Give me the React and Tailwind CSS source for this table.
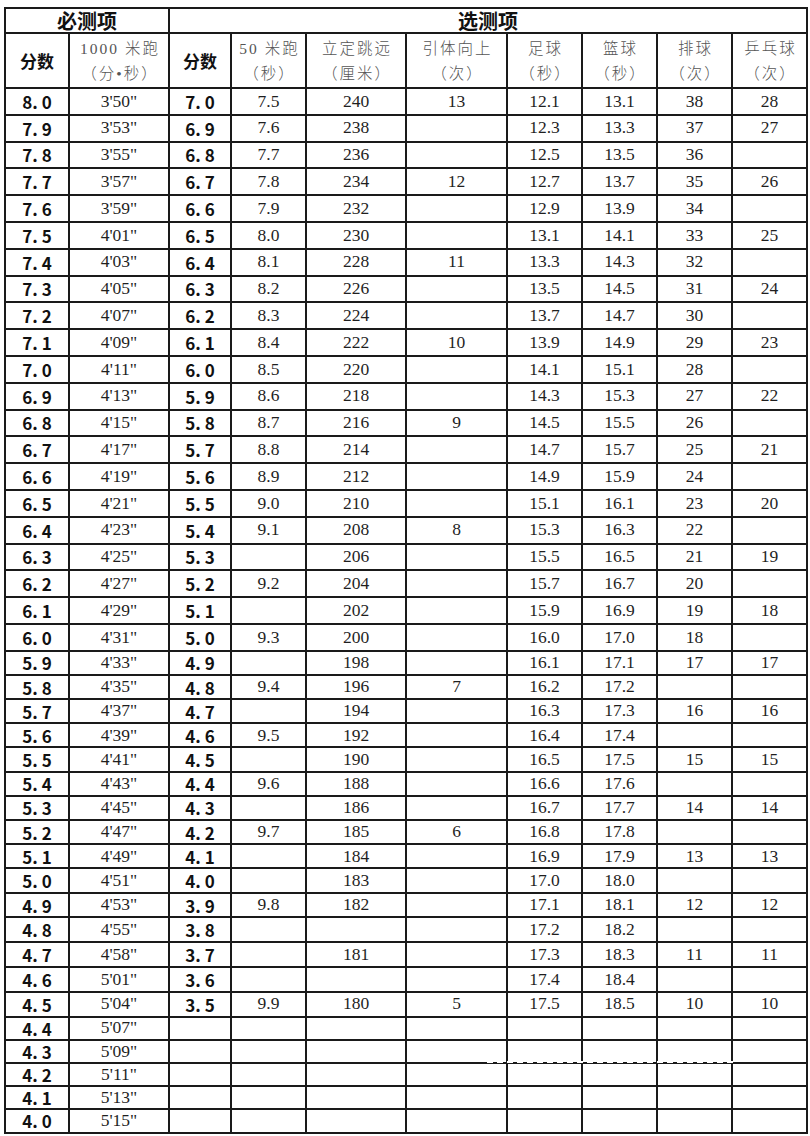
import React from 'react';

const required = [
  ['8. 0', "3'50\""], ['7. 9', "3'53\""], ['7. 8', "3'55\""], ['7. 7', "3'57\""], ['7. 6', "3'59\""],
  ['7. 5', "4'01\""], ['7. 4', "4'03\""], ['7. 3', "4'05\""], ['7. 2', "4'07\""], ['7. 1', "4'09\""],
  ['7. 0', "4'11\""], ['6. 9', "4'13\""], ['6. 8', "4'15\""], ['6. 7', "4'17\""], ['6. 6', "4'19\""],
  ['6. 5', "4'21\""], ['6. 4', "4'23\""], ['6. 3', "4'25\""], ['6. 2', "4'27\""], ['6. 1', "4'29\""],
  ['6. 0', "4'31\""], ['5. 9', "4'33\""], ['5. 8', "4'35\""], ['5. 7', "4'37\""], ['5. 6', "4'39\""],
  ['5. 5', "4'41\""], ['5. 4', "4'43\""], ['5. 3', "4'45\""], ['5. 2', "4'47\""], ['5. 1', "4'49\""],
  ['5. 0', "4'51\""], ['4. 9', "4'53\""], ['4. 8', "4'55\""], ['4. 7', "4'58\""], ['4. 6', "5'01\""],
  ['4. 5', "5'04\""], ['4. 4', "5'07\""], ['4. 3', "5'09\""], ['4. 2', "5'11\""], ['4. 1', "5'13\""],
  ['4. 0', "5'15\""],
];

// 分数, 50米跑, 立定跳远, 引体向上, 足球, 篮球, 排球, 乒乓球
const optional = [
  ['7. 0', '7.5', '240', '13', '12.1', '13.1', '38', '28'],
  ['6. 9', '7.6', '238', '', '12.3', '13.3', '37', '27'],
  ['6. 8', '7.7', '236', '', '12.5', '13.5', '36', ''],
  ['6. 7', '7.8', '234', '12', '12.7', '13.7', '35', '26'],
  ['6. 6', '7.9', '232', '', '12.9', '13.9', '34', ''],
  ['6. 5', '8.0', '230', '', '13.1', '14.1', '33', '25'],
  ['6. 4', '8.1', '228', '11', '13.3', '14.3', '32', ''],
  ['6. 3', '8.2', '226', '', '13.5', '14.5', '31', '24'],
  ['6. 2', '8.3', '224', '', '13.7', '14.7', '30', ''],
  ['6. 1', '8.4', '222', '10', '13.9', '14.9', '29', '23'],
  ['6. 0', '8.5', '220', '', '14.1', '15.1', '28', ''],
  ['5. 9', '8.6', '218', '', '14.3', '15.3', '27', '22'],
  ['5. 8', '8.7', '216', '9', '14.5', '15.5', '26', ''],
  ['5. 7', '8.8', '214', '', '14.7', '15.7', '25', '21'],
  ['5. 6', '8.9', '212', '', '14.9', '15.9', '24', ''],
  ['5. 5', '9.0', '210', '', '15.1', '16.1', '23', '20'],
  ['5. 4', '9.1', '208', '8', '15.3', '16.3', '22', ''],
  ['5. 3', '', '206', '', '15.5', '16.5', '21', '19'],
  ['5. 2', '9.2', '204', '', '15.7', '16.7', '20', ''],
  ['5. 1', '', '202', '', '15.9', '16.9', '19', '18'],
  ['5. 0', '9.3', '200', '', '16.0', '17.0', '18', ''],
  ['4. 9', '', '198', '', '16.1', '17.1', '17', '17'],
  ['4. 8', '9.4', '196', '7', '16.2', '17.2', '', ''],
  ['4. 7', '', '194', '', '16.3', '17.3', '16', '16'],
  ['4. 6', '9.5', '192', '', '16.4', '17.4', '', ''],
  ['4. 5', '', '190', '', '16.5', '17.5', '15', '15'],
  ['4. 4', '9.6', '188', '', '16.6', '17.6', '', ''],
  ['4. 3', '', '186', '', '16.7', '17.7', '14', '14'],
  ['4. 2', '9.7', '185', '6', '16.8', '17.8', '', ''],
  ['4. 1', '', '184', '', '16.9', '17.9', '13', '13'],
  ['4. 0', '', '183', '', '17.0', '18.0', '', ''],
  ['3. 9', '9.8', '182', '', '17.1', '18.1', '12', '12'],
  ['3. 8', '', '', '', '17.2', '18.2', '', ''],
  ['3. 7', '', '181', '', '17.3', '18.3', '11', '11'],
  ['3. 6', '', '', '', '17.4', '18.4', '', ''],
  ['3. 5', '9.9', '180', '5', '17.5', '18.5', '10', '10'],
];

const rowHeight = (i) => {
  if (i < 21) return 'h-[26.8px]';
  if (i < 31) return 'h-[24.2px]';
  if (i < 36) return 'h-[24.8px]';
  return 'h-[23.2px]';
};

const cell = 'border-2 border-[#1a1a1a] p-0 text-center align-middle';
const bold = "font-['Noto_Sans_CJK_SC',sans-serif] font-bold text-[17px] text-[#111]";
const serif = "font-['Liberation_Serif',serif] text-[17.5px] text-[#1f1f1f]";
const head = "font-['Liberation_Serif','Noto_Sans_CJK_SC',sans-serif] font-light text-[15.5px] leading-[25px] tracking-[2px] text-[#555]";

const HeadCell = ({ top, bottom }) => (
  <th className={`${cell} ${head} pl-[2px] font-light`}>
    <div>{top}</div>
    <div>{bottom}</div>
  </th>
);

export default function App() {
  return (
    <div className="relative min-h-[1136px] w-[810px] bg-white pl-[4px] pt-[7px]">
      <table className="w-[802px] table-fixed border-collapse">
        <colgroup>
          <col className="w-[64px]" />
          <col className="w-[100px]" />
          <col className="w-[62px]" />
          <col className="w-[75px]" />
          <col className="w-[100px]" />
          <col className="w-[101px]" />
          <col className="w-[75px]" />
          <col className="w-[75px]" />
          <col className="w-[75px]" />
          <col className="w-[75px]" />
        </colgroup>
        <thead>
          <tr className="h-[25px]">
            <th colSpan={2} className={`${cell} font-['Noto_Sans_CJK_SC',sans-serif] text-[20px] leading-[22px] font-bold text-[#111]`}>
              必测项
            </th>
            <th colSpan={8} className={`${cell} font-['Noto_Sans_CJK_SC',sans-serif] text-[20px] leading-[22px] font-bold text-[#111]`}>
              选测项
            </th>
          </tr>
          <tr className="h-[55px]">
            <th className={`${cell} ${bold}`}>分数</th>
            <HeadCell top="1000 米跑" bottom="（分•秒）" />
            <th className={`${cell} ${bold}`}>分数</th>
            <HeadCell top="50 米跑" bottom="（秒）" />
            <HeadCell top="立定跳远" bottom="（厘米）" />
            <HeadCell top="引体向上" bottom="（次）" />
            <HeadCell top="足球" bottom="（秒）" />
            <HeadCell top="篮球" bottom="（秒）" />
            <HeadCell top="排球" bottom="（次）" />
            <HeadCell top="乒乓球" bottom="（次）" />
          </tr>
        </thead>
        <tbody>
          {required.map(([score, run], i) => {
            const opt = optional[i];
            return (
              <tr key={score} className={rowHeight(i)}>
                <td className={`${cell} ${bold} leading-none`}>{score}</td>
                <td className={`${cell} ${serif} leading-none`}>{run}</td>
                {opt ? (
                  opt.map((v, j) => (
                    <td key={j} className={`${cell} ${j === 0 ? bold : serif} leading-none`}>
                      {v}
                    </td>
                  ))
                ) : (
                  Array.from({ length: 8 }).map((_, j) => <td key={j} className={cell}></td>)
                )}
              </tr>
            );
          })}
        </tbody>
      </table>
      <div className="absolute left-[487px] top-[1061px] w-[246px] border-t-2 border-dashed border-white"></div>
    </div>
  );
}
